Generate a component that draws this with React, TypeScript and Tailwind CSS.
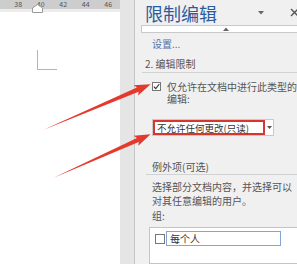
import React from "react";

const cjk = "font-['Noto_Sans_CJK_SC','Noto_Sans',sans-serif]";

function Arrow({ x, y, len, angle }: { x: number; y: number; len: number; angle: number }) {
  const h = len - 14;
  return (
    <g transform={`translate(${x} ${y}) rotate(${angle})`}>
      <polygon
        points={`0,0 ${h},-2.2 ${h - 2},-5.5 ${len},0 ${h - 2},5.5 ${h},2.2`}
        fill="#e5392d"
      />
    </g>
  );
}

export default function App() {
  return (
    <div className={`relative flex h-[264px] w-[297px] overflow-hidden bg-white ${cjk}`}>
      {/* document side */}
      <div className="flex w-[121px] flex-col">
        <div className="relative flex h-[12px] flex-col">
          <div className="flex h-[9px] items-center bg-[#cdcdcd] pl-[7px] text-[7px] leading-none text-[#555]">
            {["38", "40", "42", "44", "46"].map((n) => (
              <span key={n} className="w-[22.5px] text-center">
                {n}
              </span>
            ))}
          </div>
          <div className="h-[3px] bg-[#ececec]" />
          <svg className="absolute left-[32px] top-[4px]" width="11" height="9" viewBox="0 0 11 9">
            <path d="M0.5 8.5 V4 L5.5 0.5 L10.5 4 V8.5 Z" fill="#fff" stroke="#9a9a9a" />
          </svg>
        </div>
        <div className="flex-1 pl-[37px] pt-[38px]">
          <div className="h-[20px] w-[20px] border-b border-l border-[#b5b5b5]" />
        </div>
      </div>
      <div className="w-[14px] bg-[#e5e5e5]" />
      <div className="w-px bg-[#c6c6c6]" />

      {/* restrict editing pane */}
      <div className="flex flex-1 flex-col bg-[#f0f0f0] text-[10px] text-[#555]">
        <div className="flex h-[28px] items-center pl-[10px]">
          <span className="text-[18px] leading-none text-[#2d5c9e]">限制编辑</span>
          <svg className="ml-auto mr-[26px]" width="6" height="4" viewBox="0 0 6 4">
            <path d="M0 0 H6 L3 3.5 Z" fill="#666" />
          </svg>
          <svg className="mr-[-2px]" width="9" height="9" viewBox="0 0 9 9">
            <path d="M1 1 L8 8 M8 1 L1 8" stroke="#555" strokeWidth="1.4" />
          </svg>
        </div>
        <div className="ml-[6px] flex h-[8px] items-center border border-r-0 border-[#c9c9c9] bg-white">
          <svg className="ml-[81px]" width="6" height="4" viewBox="0 0 6 4">
            <path d="M0 4 H6 L3 0.5 Z" fill="#666" />
          </svg>
        </div>
        <div className="flex h-[24px] items-center pl-[17px] text-[#5473a8]">设置...</div>
        <div className="ml-[7px] h-[19px] border-b border-[#d2d2d2] pl-[3px] pt-[2px] leading-[16px]">
          2. 编辑限制
        </div>
        <div className="mt-[8px] flex pl-[17px]">
          <div className="mt-[1px] flex h-[9px] w-[9px] shrink-0 items-center justify-center border border-[#777] bg-white">
            <svg width="7" height="7" viewBox="0 0 7 7">
              <path d="M0.8 3.6 L2.8 5.6 L6.3 1" fill="none" stroke="#333" strokeWidth="1.1" />
            </svg>
          </div>
          <div className="ml-[6px] flex flex-col whitespace-nowrap leading-[12px]">
            <span>仅允许在文档中进行此类型的</span>
            <span>编辑:</span>
          </div>
        </div>
        <div className="ml-[17px] mt-[14px] flex h-[17px] w-[122px] border border-[#c9c9c9] bg-white">
          <div className="flex w-[112px] items-center border-2 border-[#d9352c] pl-[2px] text-[9.5px] text-[#333]">
            不允许任何更改(只读)
          </div>
          <div className="flex flex-1 items-center justify-center">
            <svg width="5" height="3" viewBox="0 0 5 3">
              <path d="M0 0 H5 L2.5 3 Z" fill="#555" />
            </svg>
          </div>
        </div>
        <div className="ml-[11px] mt-[18px] h-[21px] border-b border-[#d2d2d2] pl-[6px] pt-[5px] leading-[16px]">
          例外项(可选)
        </div>
        <div className="mt-[5px] flex flex-col pl-[17px] leading-[14px]">
          <span>选择部分文档内容，并选择可以</span>
          <span>对其任意编辑的用户。</span>
        </div>
        <div className="mt-px pl-[17px] leading-[14px]">组:</div>
        <div className="ml-[14px] mt-[4px] h-[40px] border border-r-0 border-[#c4c4c4] bg-white pl-[5px] pt-[3px]">
          <div className="flex items-center">
            <div className="h-[10px] w-[10px] border border-[#777] bg-white" />
            <div className="ml-[1px] flex h-[15px] w-[115px] items-center border border-[#7ea6d8] pl-[3px] text-[#333]">
              每个人
            </div>
          </div>
        </div>
      </div>

      {/* annotation arrows */}
      <svg className="pointer-events-none absolute inset-0" width="297" height="264" viewBox="0 0 297 264">
        <Arrow x={43} y={130} len={117} angle={-23.07} />
        <Arrow x={53} y={178} len={107} angle={-24.18} />
      </svg>
    </div>
  );
}
